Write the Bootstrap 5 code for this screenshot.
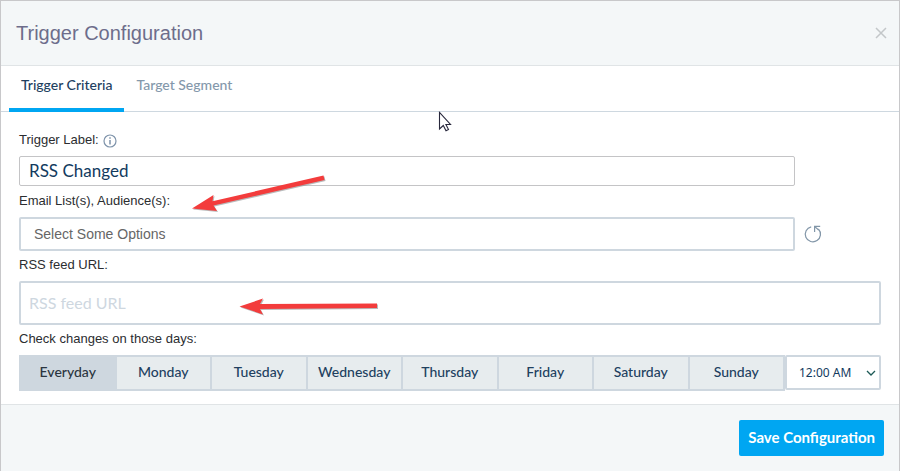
<!DOCTYPE html>
<html lang="en">
<head>
<meta charset="utf-8">
<meta name="viewport" content="width=device-width, initial-scale=1">
<title>Trigger Configuration</title>
<link href="https://cdn.jsdelivr.net/npm/bootstrap@5.3.0/dist/css/bootstrap.min.css" rel="stylesheet">
<style>
body { font-family: "Liberation Sans", Arial, sans-serif; font-size: 13px; color: #2b2d30; }
.dialog-panel { border: 1px solid #c8c8ca; background: #fff; }
.dialog-head, .dialog-foot { background: #f4f7f8; }
.dialog-head { height: 65px; padding: 0 11px 0 15px; border-bottom: 1px solid #e0e4e6; }
.dialog-head h1 { font-size: 20px; line-height: 24px; color: #6d6d8b; }
.close-btn { line-height: 0; color: #c3c7c9; }
.crit-tabs { height: 46px; padding: 0 8px; border-bottom: 1px solid #ced8e0; }
.crit-tabs .nav-link { height: 46px; padding: 0 12px; font: 500 14px/38px Lato, sans-serif; border-bottom: 4px solid transparent; color: #8498ab; }
.crit-tabs .nav-link.active { color: #21405f; border-bottom-color: #00a6f2; }
.crit-form { padding: 14px 18px 13px; }
.crit-form label { line-height: 28px; padding-bottom: 2px; display: block; }
.crit-form .form-control, .crit-form .form-select { border: 2px solid #ced7df; border-radius: 2px; box-shadow: none; }
.field-short { width: 90%; }
.crit-form .trigger-name { height: 30px; padding: 0 9px 2px; margin-bottom: 1px; border: 1px solid #c4c4c6; font: 17px Lato, sans-serif; color: #123a5e; }
.crit-form .list-pick { height: 34px; padding: 0 13px 1px; font-size: 14px; font-family: inherit; }
.list-pick::placeholder { color: #666; opacity: 1; }
.crit-form .feed-url { height: 44px; padding: 0 8px 2px; font: 16px Lato, sans-serif; }
.feed-url::placeholder { color: #ced7df; opacity: 1; }
.day-group { flex: 1 1 0; }
.day-group .btn { flex: 1 1 0; margin-left: -2px; height: 36px; padding: 0 0 3px; border: 2px solid #ced7df; border-radius: 0; background: #e7ecee; font: 500 14px Lato, sans-serif; color: #21405f; }
.day-group .btn:first-child { margin-left: 0; }
.day-group .btn.active { background: #ced7df; border-color: #ced7df; color: #2b3540; }
.crit-form .hour-pick { width: 96px; height: 35px; padding: 0 20px 0 12px; font: 12px "Noto Sans", sans-serif; color: #123a5e; background: none; }
.hour-chevron { position: absolute; right: 5px; top: 15px; pointer-events: none; }
.dialog-foot { border-top: 1px solid #e0e4e6; padding: 15px; }
.save-btn, .save-btn:hover { height: 36px; padding: 0 9px 2px; border: 0; border-radius: 2px; background: #00a6f2; color: #fff; font: 700 15px Lato, sans-serif; }
.annotations { left: 0; top: 0; pointer-events: none; }
</style>
</head>
<body>
<main class="dialog-panel min-vh-100 d-flex flex-column position-relative">
  <header class="dialog-head d-flex align-items-center justify-content-between">
    <h1 class="m-0">Trigger Configuration</h1>
    <button type="button" class="close-btn btn p-0 border-0" aria-label="Close">
      <svg width="14" height="14" viewBox="0 0 14 14" fill="none" stroke="currentColor" stroke-width="1.5"><path d="M2 2l10 10M12 2L2 12"/></svg>
    </button>
  </header>
  <nav class="crit-tabs nav">
    <a class="nav-link active" href="#criteria" aria-current="page">Trigger Criteria</a>
    <a class="nav-link" href="#segment">Target Segment</a>
  </nav>
  <form class="crit-form">
    <div class="d-flex align-items-center gap-1">
      <label for="trigger-name">Trigger Label:</label>
      <svg width="14" height="14" viewBox="0 0 14 14" fill="none" stroke="#7e93aa" stroke-width="1.2"><circle cx="7" cy="7" r="6"/><path d="M7 6v4.5M7 3.3v1.4" stroke-width="1.5"/></svg>
    </div>
    <input id="trigger-name" class="form-control trigger-name field-short" type="text" value="RSS Changed">
    <label for="list-pick">Email List(s), Audience(s):</label>
    <div class="d-flex align-items-center gap-2">
      <input id="list-pick" class="form-control list-pick field-short" type="text" placeholder="Select Some Options">
      <button type="button" class="btn p-0 border-0 lh-1" aria-label="Refresh lists">
        <svg width="20" height="20" viewBox="0 0 20 20" fill="none" stroke="#8296a8" stroke-width="1.2"><path d="M8.2 2.8A7.6 7.6 0 1 0 15.4 5"/><path d="M11.6 8V2.4h5.6M11.8 2.6l3.8 3.4"/></svg>
      </button>
    </div>
    <label for="feed-url">RSS feed URL:</label>
    <input id="feed-url" class="form-control feed-url" type="url" placeholder="RSS feed URL">
    <label for="hour-pick">Check changes on those days:</label>
    <div class="d-flex">
      <div class="day-group d-flex" role="group" aria-label="Days">
        <button type="button" class="btn active" aria-pressed="true">Everyday</button>
        <button type="button" class="btn">Monday</button>
        <button type="button" class="btn">Tuesday</button>
        <button type="button" class="btn">Wednesday</button>
        <button type="button" class="btn">Thursday</button>
        <button type="button" class="btn">Friday</button>
        <button type="button" class="btn">Saturday</button>
        <button type="button" class="btn">Sunday</button>
      </div>
      <div class="position-relative">
        <select id="hour-pick" class="form-select hour-pick"><option>12:00 AM</option><option>1:00 AM</option></select>
        <svg class="hour-chevron" width="10" height="7" viewBox="0 0 10 7" fill="none" stroke="#1d5a56" stroke-width="1.3"><path d="M1 1l4 4 4-4"/></svg>
      </div>
    </div>
  </form>
  <footer class="dialog-foot flex-grow-1 text-end">
    <button type="button" class="btn save-btn">Save Configuration</button>
  </footer>
  <svg class="annotations position-absolute" width="460" height="330" viewBox="1 1 460 330" aria-hidden="true">
    <g fill="#8b8d90" opacity=".6" transform="translate(1 1)"><path d="M192 208.500L213.500 195l-1 6.200L323.500 175.500l1 4.500L213.500 205.500l3.500 5.500z"/><path d="M239.500 306.500L263 298.500l-3 5.500L377 303.500v4.500L260 309l3 5.500z"/></g>
    <g fill="#f33c3c"><path d="M192 208.500L213.500 195l-1 6.200L323.500 175.500l1 4.500L213.500 205.500l3.500 5.500z"/><path d="M239.500 306.500L263 298.500l-3 5.500L377 303.500v4.500L260 309l3 5.500z"/></g>
    <path d="M439.500 112.500v16.500l3.800-3.500 2.700 5.300 2.500-1.300-2.600-5h4.600z" fill="#fff" stroke="#28283c" stroke-width="1.100"/>
  </svg>
</main>
<script src="https://cdn.jsdelivr.net/npm/bootstrap@5.3.0/dist/js/bootstrap.bundle.min.js"></script>
</body>
</html>
